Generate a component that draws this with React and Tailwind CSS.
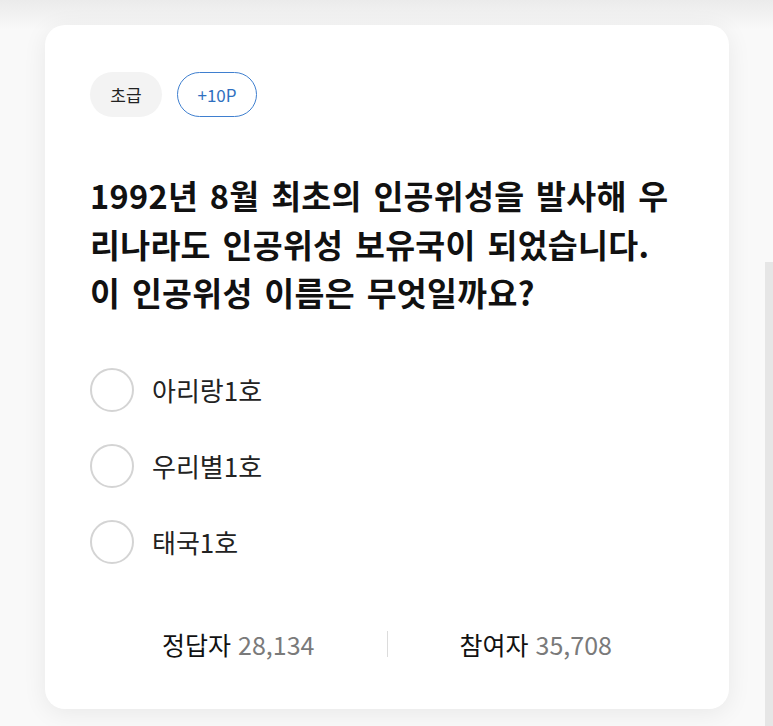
const options = ["아리랑1호", "우리별1호", "태국1호"];

const QuizCard = () => {
  return (
    <div className="relative h-[684px] w-[684px] rounded-[20px] bg-white px-[45px] pt-[47px] shadow-[0_4px_24px_rgba(0,0,0,0.07)]">
      <div className="flex items-center gap-[15px]">
        <span className="flex h-[45px] w-[72px] items-center justify-center rounded-full bg-[#f3f3f3] text-[17px] text-[#222]">
          초급
        </span>
        <span className="flex h-[45px] w-[80px] items-center justify-center rounded-full border-[1.5px] border-[#3f7fcf] text-[17px] text-[#2f6fc0]">
          +10P
        </span>
      </div>

      <h2 className="mt-[54px] break-all text-[32.5px] font-bold leading-[48.5px] tracking-[0.3px] text-[#111] [word-spacing:4px]">
        1992년 8월 최초의 인공위성을 발사해 우리나라도 인공위성 보유국이 되었습니다. 이 인공위성 이름은 무엇일까요?
      </h2>

      <ul className="mt-[51px] flex flex-col gap-[32px]">
        {options.map((opt) => (
          <li key={opt} className="flex items-center gap-[18px]">
            <span className="h-[44px] w-[44px] shrink-0 rounded-full border-2 border-[#d4d4d4]" />
            <span className="text-[26px] leading-[36px] text-[#222]">{opt}</span>
          </li>
        ))}
      </ul>

      <div className="mt-[62px] flex items-center">
        <div className="flex flex-1 items-baseline justify-center text-[25px] leading-[36px]">
          <span className="text-[#111]">정답자</span>
          <span className="ml-[7px] text-[#7a7a7a]">28,134</span>
        </div>
        <div className="h-[26px] w-px bg-[#dcdcdc]" />
        <div className="flex flex-1 items-baseline justify-center text-[25px] leading-[36px]">
          <span className="text-[#111]">참여자</span>
          <span className="ml-[7px] text-[#7a7a7a]">35,708</span>
        </div>
      </div>
    </div>
  );
};

export default function App() {
  return (
    <div
      className="relative flex h-[726px] w-[773px] justify-start overflow-hidden bg-[#f9f9f9] pl-[45px] pt-[25px]"
      style={{ fontFamily: '"Noto Sans CJK KR", "Noto Sans", sans-serif' }}
    >
      <div className="absolute inset-x-0 top-0 h-[30px] bg-gradient-to-b from-[#ebebeb] to-[#f9f9f9]" />
      <QuizCard />
      <div className="absolute right-0 top-[262px] bottom-0 w-[8px] bg-[#e6e6e6]" />
    </div>
  );
}
